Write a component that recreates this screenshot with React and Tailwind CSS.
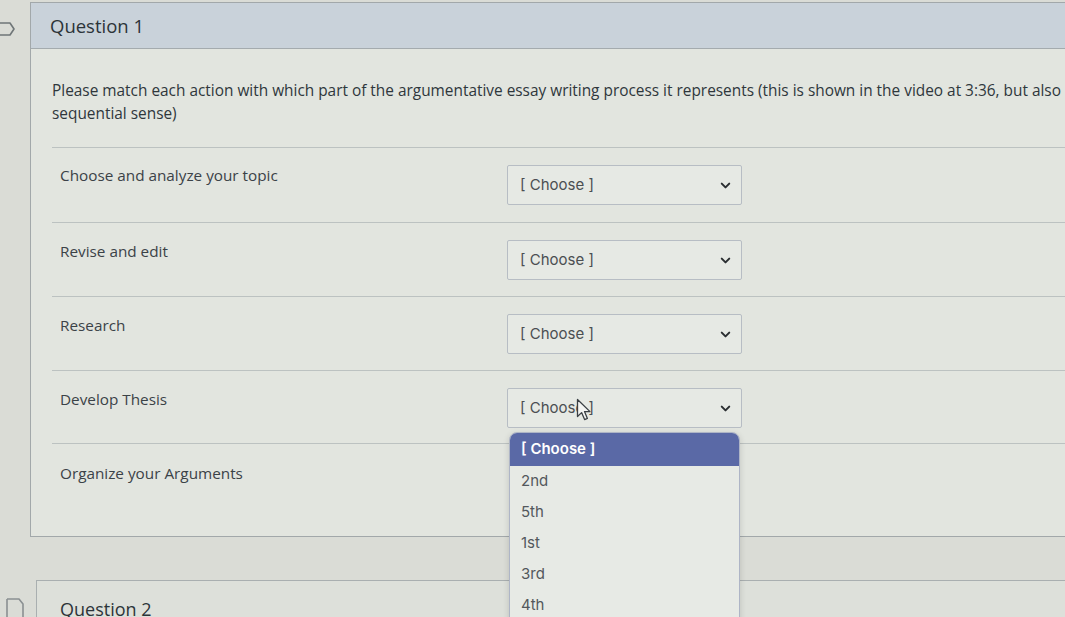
import React from "react";
import { ChevronDown } from "lucide-react";

const rows = [
  { label: "Choose and analyze your topic", h: "h-[75px]", pt: "pt-[17px]", open: false },
  { label: "Revise and edit", h: "h-[74px]", pt: "pt-[18px]", open: false },
  { label: "Research", h: "h-[74px]", pt: "pt-[18px]", open: false },
  { label: "Develop Thesis", h: "h-[73px]", pt: "pt-[18px]", open: false },
  { label: "Organize your Arguments", h: "h-[93px]", pt: "pt-[19px]", open: true },
];

const options = ["2nd", "5th", "1st", "3rd", "4th"];

function Select({ hidden }) {
  return (
    <div
      className={`w-[235px] h-[40px] border border-[#b7bdc4] bg-[#e6e9e4] rounded-[2px] flex items-center justify-between pl-[12px] pr-[8px] font-['Inter'] text-[15px] text-[#4b4f52] ${
        hidden ? "invisible" : ""
      }`}
    >
      <span>[ Choose ]</span>
      <ChevronDown size={15} strokeWidth={3.2} className="text-[#2a2e31]" />
    </div>
  );
}

function FlagIcon() {
  // right-pointing bookmark flag, partly cut by the viewport edge
  return (
    <svg width="24" height="16" viewBox="0 0 24 16" className="-ml-[7px]">
      <path d="M1 2 H17 L21 8 L17 14 H1" fill="none" stroke="#6f7678" strokeWidth="1.6" strokeLinejoin="round" />
    </svg>
  );
}

function BoxIcon() {
  return (
    <svg width="22" height="20" viewBox="0 0 22 20">
      <path d="M4 2 H16 L20 7 V20 M4 2 V20" fill="none" stroke="#8a9092" strokeWidth="1.6" strokeLinejoin="round" />
    </svg>
  );
}

function Cursor() {
  return (
    <svg width="18" height="24" viewBox="0 0 18 24">
      <path
        d="M1.5 1.5 L1.5 18.5 L5.6 14.6 L8.6 21.6 L11.4 20.4 L8.5 13.6 L14 13.6 Z"
        fill="#f4f5f3"
        stroke="#3a3f44"
        strokeWidth="1.3"
        strokeLinejoin="round"
      />
    </svg>
  );
}

export default function App() {
  return (
    <div className="relative w-[1065px] h-[617px] overflow-hidden bg-[#dadcd6] font-['Open_Sans',sans-serif] text-[#353d42] pt-[2px]">
      {/* Question 1 */}
      <div className="flex">
        <div className="w-[30px] shrink-0 pt-[19px]">
          <FlagIcon />
        </div>
        <div className="w-[1100px] shrink-0 border border-[#a2a8aa] bg-[#e2e5df]">
          <div className="h-[46px] bg-[#c9d2da] border-b border-[#a4abae] flex items-center pl-[19px] text-[18.5px] text-[#2c3439]">
            Question 1
          </div>
          <div className="pl-[21px] pt-[30px] text-[15.4px] leading-[23px] text-[#2f373c]">
            <p className="whitespace-nowrap">
              Please match each action with which part of the argumentative essay writing process it represents (this is shown in the video at 3:36, but also makes
            </p>
            <p className="whitespace-nowrap">sequential sense)</p>
          </div>
          <div className="ml-[21px] mt-[22px]">
            {rows.map((r) => (
              <div key={r.label} className={`flex border-t border-[#bcc2c1] ${r.h}`}>
                <div className={`w-[455px] shrink-0 pl-[8px] ${r.pt} text-[15.3px] leading-[20px] text-[#3b4247]`}>
                  {r.label}
                </div>
                <div className="pt-[17px]">
                  <Select hidden={r.open} />
                </div>
              </div>
            ))}
          </div>
        </div>
      </div>

      {/* Question 2 */}
      <div className="flex mt-[43px]">
        <div className="w-[36px] shrink-0 pt-[17px] pl-[3px]">
          <BoxIcon />
        </div>
        <div className="w-[1100px] shrink-0 border border-[#a9afb0] bg-[#dde0da] h-[60px] pl-[23px] pt-[15px] text-[18px] text-[#2c3439]">
          Question 2
        </div>
      </div>

      {/* open dropdown list */}
      <div className="absolute left-[509px] top-[432px] w-[231px] h-[200px] rounded-t-[8px] border border-[#aeb5c6] bg-[#e7eae5] shadow-[0_2px_6px_rgba(0,0,0,0.15)] overflow-hidden font-['Inter'] text-[15px]">
        <div className="h-[33px] bg-[#5a69a6] text-white font-semibold flex items-center pl-[11px]">
          [ Choose ]
        </div>
        {options.map((o) => (
          <div key={o} className="h-[31px] flex items-center pl-[11px] text-[#53585c]">
            {o}
          </div>
        ))}
      </div>

      <div className="absolute left-[576px] top-[398px]">
        <Cursor />
      </div>
    </div>
  );
}
